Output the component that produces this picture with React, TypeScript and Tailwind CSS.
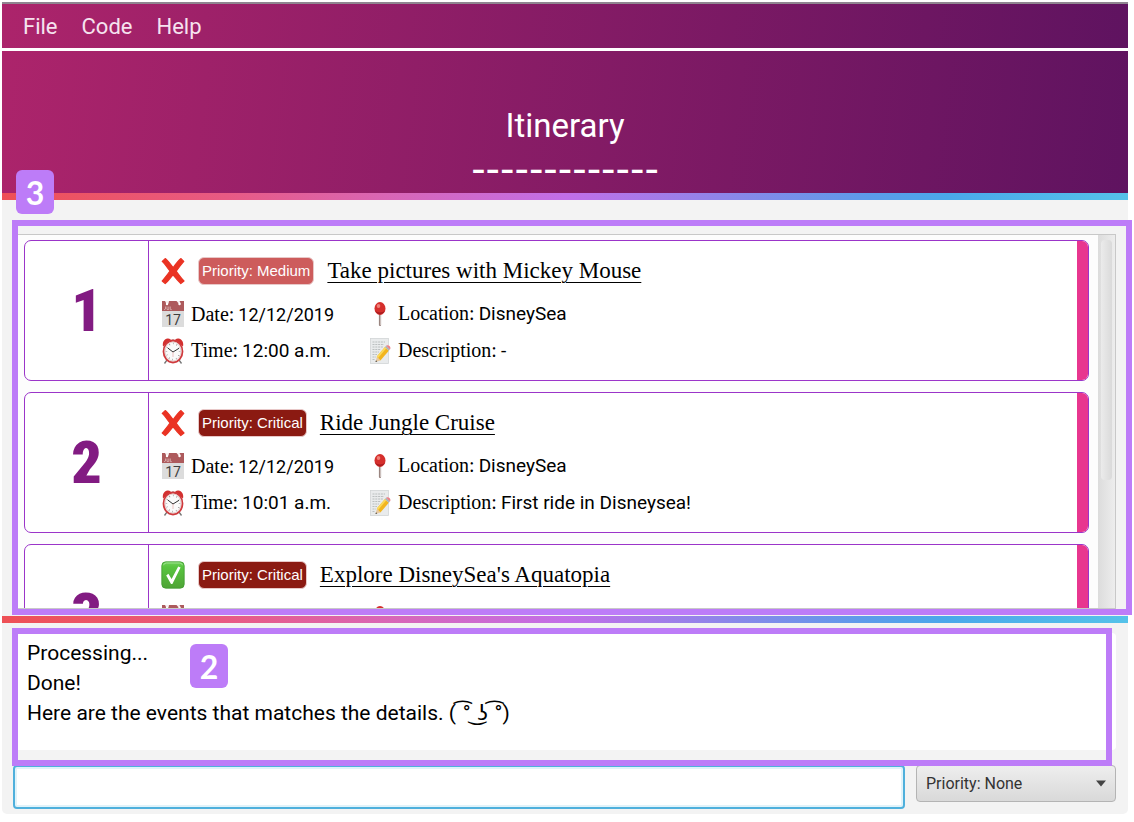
import React from "react";

type Level = "Medium" | "Critical";

interface Trip {
  title: string;
  done: boolean;
  level: Level;
  date: string;
  time: string;
  location: string;
  description: string;
}

const trips: Trip[] = [
  {
    title: "Take pictures with Mickey Mouse",
    done: false,
    level: "Medium",
    date: "12/12/2019",
    time: "12:00 a.m.",
    location: "DisneySea",
    description: "-",
  },
  {
    title: "Ride Jungle Cruise",
    done: false,
    level: "Critical",
    date: "12/12/2019",
    time: "10:01 a.m.",
    location: "DisneySea",
    description: "First ride in Disneysea!",
  },
  {
    title: "Explore DisneySea's Aquatopia",
    done: true,
    level: "Critical",
    date: "12/12/2019",
    time: "11:00 a.m.",
    location: "DisneySea",
    description: "-",
  },
];

const levelColor: Record<Level, string> = {
  Medium: "bg-[#cd5c5c]",
  Critical: "bg-[#8b1a12]",
};

function CrossIcon() {
  return (
    <svg width="24" height="28" viewBox="0 0 24 28" aria-hidden="true">
      <path
        d="M4.200 1.600C6.500 3 9.500 7.500 12.200 10.600C14.500 7.500 17.500 3.500 20 1.600L22.800 4.400C20.500 7 17.800 10.500 15.200 14.200C17.600 17.500 20.500 21.500 23 24L19.800 26.600C17.400 24.500 14.800 21 12 17.800C9.300 21 6.800 24.500 4.200 26.600L1.200 24C3.500 21.200 6.400 17.800 9 14C6.500 10.800 3.800 6.800 1.200 4.400Z"
        fill="#ea3323"
        stroke="#ea3323"
        strokeWidth="1.200"
        strokeLinejoin="round"
      />
    </svg>
  );
}

function CheckIcon() {
  return (
    <svg width="24" height="28" viewBox="0 0 24 28" aria-hidden="true">
      <defs>
        <linearGradient id="check-fill" x1="0" y1="0" x2="0" y2="1">
          <stop offset="0" stopColor="#6fd05a" />
          <stop offset="0.200" stopColor="#58c53f" />
          <stop offset="1" stopColor="#4fa436" />
        </linearGradient>
      </defs>
      <rect x="0.800" y="0.800" width="22.400" height="26.400" rx="4" fill="url(#check-fill)" stroke="#3f9c30" strokeWidth="0.800" />
      <path d="M2.500 4.200Q3 2 5.500 2H18.500Q21 2 21.500 4.200" fill="none" stroke="#a6e596" strokeWidth="0.900" />
      <path d="M5.200 14.600L7.400 12.800L10.600 18L17.200 5.400L19.600 6.600L11.400 23H10Z" fill="#fff" />
    </svg>
  );
}

function CalendarIcon() {
  return (
    <svg width="22" height="26" viewBox="0 0 22 26" aria-hidden="true">
      <rect width="22" height="26" fill="#dcdcdc" />
      <rect width="22" height="10" fill="#ad5a5c" />
      <path d="M3 0L4.500 3L6.500 2.500L7 0Z" fill="#f8f0f0" />
      <path d="M14.500 0L18 4L18.500 2L17.500 0Z" fill="#f8f0f0" />
      <circle cx="5" cy="3" r="1.200" fill="#fff" />
      <circle cx="17.500" cy="3" r="1.200" fill="#fff" />
      <path d="M3.500 5.500V8L2 8.700M5 5.500V8.500H6.800V5.500M8.300 5.500V8.600H9.800" fill="none" stroke="#dcb4b4" strokeWidth="0.800" />
      <text x="11" y="23.500" textAnchor="middle" fontFamily="Roboto, sans-serif" fontSize="14" fill="#404040">
        17
      </text>
    </svg>
  );
}

function AlarmIcon() {
  return (
    <svg width="22" height="26" viewBox="0 0 22 26" aria-hidden="true">
      <path d="M5 22L2.500 25.500M17 22L19.500 25.500" stroke="#777" strokeWidth="1.300" />
      <path d="M10 2.500H12" stroke="#999" strokeWidth="2" />
      <path d="M1 8.500C0 4 2.500 0.800 5.500 0.500C8 0.300 9 1.500 9.200 2.800Z" fill="#d3302f" />
      <path d="M21 8.500C22 4 19.500 0.800 16.500 0.500C14 0.300 13 1.500 12.800 2.800Z" fill="#d3302f" />
      <ellipse cx="11" cy="13.500" rx="9.500" ry="11" fill="#fafafa" stroke="#cf3a3d" strokeWidth="1.800" />
      <ellipse cx="11" cy="13.500" rx="8" ry="9.500" fill="none" stroke="#d9b5b3" strokeWidth="0.600" />
      <ellipse cx="11" cy="13.500" rx="6.600" ry="8" fill="none" stroke="#888" strokeWidth="1.600" strokeDasharray="0.600 3.200" />
      <path d="M5.800 10L11 14L17 10.300" fill="none" stroke="#333" strokeWidth="1" />
      <path d="M11 14V19" stroke="#d88" strokeWidth="0.500" />
    </svg>
  );
}

function PinIcon() {
  return (
    <svg width="22" height="26" viewBox="0 0 22 26" aria-hidden="true">
      <rect x="9.900" y="10" width="2.200" height="15" rx="1" fill="#9a8580" />
      <rect x="11" y="11" width="0.800" height="13" fill="#d8cfcc" />
      <ellipse cx="11" cy="7.500" rx="5.500" ry="6.500" fill="#d52f2c" />
      <path d="M6 9.500C8 14.600 14 14.600 16 9.500C14 12 8 12 6 9.500Z" fill="#a91d20" />
      <ellipse cx="9.500" cy="5" rx="1.800" ry="2" fill="#ef8078" />
    </svg>
  );
}

function MemoIcon() {
  return (
    <svg width="22" height="26" viewBox="0 0 22 26" aria-hidden="true">
      <rect x="1.400" y="0.500" width="18" height="25" fill="#e9ebec" stroke="#d2d5d6" strokeWidth="0.800" />
      <path
        d="M3.500 4H16M3.500 6.500H15M3.500 9H14M3.500 11.500H12M3.500 14H10M3.500 16.500H8M3.500 19H7M3.500 21.500H6"
        stroke="#a8acae"
        strokeWidth="0.700"
        strokeDasharray="2 0.800"
      />
      <path d="M6.500 24L8 18.500L11.400 22.400Z" fill="#e8c9a0" />
      <path d="M6.500 24L7 22.200L8.200 23.400Z" fill="#333" />
      <path d="M7.800 18.500L16 9L19.800 12.800L11.400 22.500Z" fill="#f2b51f" />
      <path d="M7.800 18.500L16 9L17.300 10.300L9.100 19.900Z" fill="#fbd95a" />
      <path d="M16 9L17.200 7.800L20.900 11.500L19.800 12.800Z" fill="#a9b3b8" />
      <path d="M17.200 7.800C19.400 6 22.700 9.300 20.900 11.500Z" fill="#ec8089" />
    </svg>
  );
}

function Detail({
  icon,
  label,
  value,
  numeric = false,
}: {
  icon: React.ReactNode;
  label: string;
  value: string;
  numeric?: boolean;
}) {
  return (
    <div className="flex h-[37px] items-center gap-[6px]">
      <span className="flex w-6 shrink-0 justify-center">{icon}</span>
      <p className="flex items-baseline gap-1 whitespace-nowrap">
        <span className="font-['Liberation_Serif',serif] text-[20px]">{label}</span>
        <span className={numeric ? "font-[Roboto,sans-serif] text-[18px]" : "font-[Roboto,sans-serif] text-[19px]"}>
          {value}
        </span>
      </p>
    </div>
  );
}

function TripCard({ trip, index }: { trip: Trip; index: number }) {
  return (
    <li className="flex h-[141px] shrink-0 overflow-hidden rounded-[7px] border border-[#9b35c9] bg-white">
      <div className="flex w-[124px] shrink-0 items-center justify-center border-r border-[#9b35c9] font-[Impact,'Roboto_Condensed','Noto_Sans_Condensed','Open_Sans_Condensed',Roboto,sans-serif] text-[60px] leading-none font-black text-[#821b82]">
        {index}
      </div>
      <div className="min-w-0 flex-1 pt-[14px] pl-3">
        <div className="mb-2 flex h-8 items-center">
          {trip.done ? <CheckIcon /> : <CrossIcon />}
          <span
            className={
              "ml-[13px] flex h-7 items-center rounded-[6px] border border-[#e8c8c8] px-[3px] font-['Liberation_Sans',sans-serif] text-[15px] whitespace-nowrap text-white " +
              levelColor[trip.level]
            }
          >
            Priority: {trip.level}
          </span>
          <h2 className="ml-[13px] font-['Liberation_Serif',serif] text-[23px] leading-8 whitespace-nowrap underline decoration-1 underline-offset-4">
            {trip.title}
          </h2>
        </div>
        <div className="grid grid-cols-[207px_1fr]">
          <Detail icon={<CalendarIcon />} label="Date:" value={trip.date} numeric />
          <Detail icon={<PinIcon />} label="Location:" value={trip.location} />
          <Detail icon={<AlarmIcon />} label="Time:" value={trip.time} />
          <Detail icon={<MemoIcon />} label="Description:" value={trip.description} />
        </div>
      </div>
      <div className="w-[11px] shrink-0 bg-[#e8368f]" />
    </li>
  );
}

function RainbowBar() {
  return (
    <div className="h-[7px] shrink-0 bg-[linear-gradient(90deg,#ee5055_0%,#e85a84_20%,#d966b5_34%,#c26ee8_50%,#5c9bea_77%,#4aa8ea_84%,#55c2e9_100%)]" />
  );
}

function Marker({ children, className }: { children: React.ReactNode; className: string }) {
  return (
    <span
      className={
        "absolute z-20 flex h-11 w-[38px] items-center justify-center rounded-[6px] bg-[#bd7cf8] pt-[2px] font-[Lato,sans-serif] text-[32px] leading-none font-bold text-white " +
        className
      }
    >
      {children}
    </span>
  );
}

export default function App() {
  return (
    <div className="flex h-screen flex-col overflow-hidden bg-white pt-[2px] pr-[6px] pb-2 pl-[2px] text-black">
      <div className="flex min-h-0 flex-1 flex-col rounded-b-[5px] bg-[#f3f3f3]">
        <nav className="flex h-[46px] shrink-0 items-center gap-6 border-t-2 border-[#8f8590] bg-[linear-gradient(97deg,#ac246b,#5f1360)] px-[21px] font-[Roboto,sans-serif] text-[22px] text-[#f6e3ef]">
          <button type="button">File</button>
          <button type="button">Code</button>
          <button type="button">Help</button>
        </nav>
        <header className="mt-[3px] flex h-[142px] shrink-0 flex-col items-center bg-[linear-gradient(97deg,#ac246b,#5f1360)] pt-[55px] text-white shadow-[0_-3px_0_#fff]">
          <h1 className="font-[Roboto,sans-serif] text-[33px] leading-10">Itinerary</h1>
          <div className="font-['DejaVu_Sans',sans-serif] text-[40px] leading-[46px]" aria-hidden="true">
            -------------
          </div>
        </header>
        <RainbowBar />

        <main className="relative flex min-h-0 flex-1 flex-col pt-[34px] pr-3 pb-[7px] pl-[14px]">
          <div className="flex min-h-0 flex-1 border border-[#c8c8c8] bg-white">
            <ol className="flex min-w-0 flex-1 flex-col gap-[11px] overflow-hidden bg-[#fdfdfd] pt-[5px] pr-[9px] pl-[7px]">
              {trips.map((trip, i) => (
                <TripCard key={trip.title} trip={trip} index={i + 1} />
              ))}
            </ol>
            <div className="w-[17px] shrink-0 bg-[linear-gradient(90deg,#dcdcdc,#ededed)] px-[3px] pt-[5px]">
              <div className="h-[240px] rounded-[4px] bg-[linear-gradient(90deg,#ebebeb,#dadada)]" />
            </div>
          </div>
          <div className="pointer-events-none absolute top-5 -right-1 bottom-px left-[10px] z-10 border-[6px] border-[#bd7cf8]" />
          <Marker className="-top-[30px] left-[14px]">3</Marker>
        </main>
        <RainbowBar />

        <footer className="relative shrink-0 pt-[10px] pr-3 pb-[5px] pl-[11px]">
          <div className="mb-[15px] h-[117px] rounded-[4px] bg-white pt-[5px] pl-[14px] font-[Roboto,'DejaVu_Sans',sans-serif] text-[21px] leading-[30px]">
            <p>Processing...</p>
            <p>Done!</p>
            <p className="whitespace-pre">Here are the events that matches the details. ( ͡° ͜ʖ ͡°)</p>
          </div>
          <div className="flex items-start gap-[11px]">
            <input
              type="text"
              aria-label="Command"
              className="h-11 min-w-0 flex-1 rounded-[4px] border-2 border-[#4fb0dc] bg-white px-3 font-[Roboto,sans-serif] text-[20px] shadow-[inset_0_0_0_2px_#e0f3fa] outline-none"
            />
            <div className="relative w-[200px]">
              <select
                aria-label="Priority"
                className="h-[37px] w-full appearance-none rounded-[4px] border border-[#b4b4b4] bg-linear-to-b from-[#eeeeee] to-[#d9d9d9] px-[9px] font-[Roboto,sans-serif] text-[16px] text-[#333]"
              >
                <option>Priority: None</option>
                <option>Priority: Medium</option>
                <option>Priority: Critical</option>
              </select>
              <svg className="pointer-events-none absolute top-[15px] right-[10px]" width="10" height="7" viewBox="0 0 10 7" aria-hidden="true">
                <path d="M0 0.500H10L5 6.500Z" fill="#444" />
              </svg>
            </div>
          </div>
          <div className="pointer-events-none absolute top-[5px] right-4 bottom-12 left-[10px] z-10 border-[6px] border-[#bd7cf8]" />
          <Marker className="top-[21px] left-[188px]">2</Marker>
        </footer>
      </div>
    </div>
  );
}
